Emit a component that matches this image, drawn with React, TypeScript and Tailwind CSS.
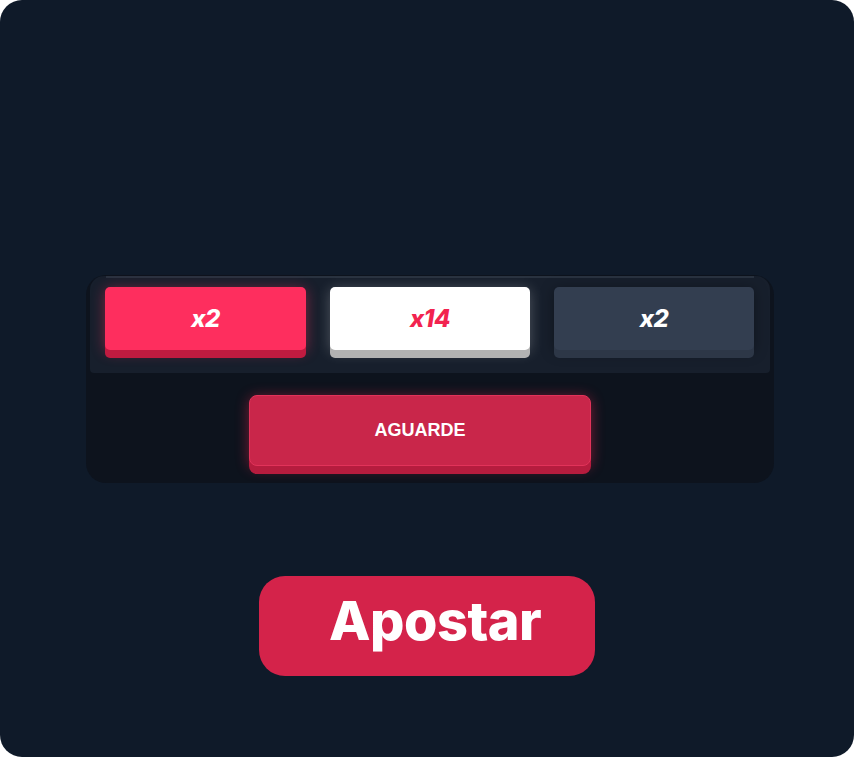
export default function App() {
  const chips = [
    { label: "x2", face: "bg-[#fe2e5e] text-white", ledge: "shadow-[0_8px_0_#c01b40,0_2px_14px_rgba(255,46,94,0.45)]" },
    { label: "x14", face: "bg-white text-[#f2234f]", ledge: "shadow-[0_8px_0_#b2b2b2,0_2px_14px_rgba(255,255,255,0.25)]" },
    { label: "x2", face: "bg-[#333e50] text-white", ledge: "shadow-[0_8px_0_#2d3747,0_2px_14px_rgba(0,0,0,0.35)]" },
  ];

  return (
    <div className="w-[854px] h-[757px] bg-white">
      <div className="w-full h-full rounded-[22px] bg-[#0f1a29] pt-[275px] flex flex-col">
        {/* game panel */}
        <div className="ml-[86px] w-[688px] h-[208px] rounded-[20px] bg-[#0d131d] pt-[1px] px-[4px]">
          <div className="rounded-t-[14px] rounded-b-[4px] bg-[#171f2c] pb-[23px]">
            <div className="mx-[16px] h-[2px] bg-[#29323f]" />
            <div className="mt-[9px] px-[15px] flex gap-[24px]">
              {chips.map((c, i) => (
                <div
                  key={i}
                  className={`${i === 0 ? "w-[201px]" : "w-[200px]"} h-[63px] rounded-[5px] flex items-center justify-center ${c.face} ${c.ledge}`}
                >
                  <span className="font-['Inter',sans-serif] italic font-extrabold text-[24px] tracking-[-0.5px]">{c.label}</span>
                </div>
              ))}
            </div>
          </div>
          <div className="mt-[22px] ml-[159px] w-[342px] h-[71px] rounded-[8px] bg-[#c9264a] border border-[#e2335a] shadow-[0_8px_0_#b61c3e,0_2px_14px_rgba(255,40,80,0.45)] flex items-center justify-center">
            <span className="font-['Liberation_Sans',Arial,sans-serif] font-bold text-[18px] text-white">AGUARDE</span>
          </div>
        </div>

        {/* bet button */}
        <button className="mt-[93px] ml-[259px] w-[336px] h-[100px] rounded-[26px] bg-[#d4234a] flex items-center pl-[70px] pb-[10px]">
          <span className="font-['Inter',sans-serif] font-extrabold text-[54px] leading-none text-white tracking-[-0.5px]">Apostar</span>
        </button>
      </div>
    </div>
  );
}
